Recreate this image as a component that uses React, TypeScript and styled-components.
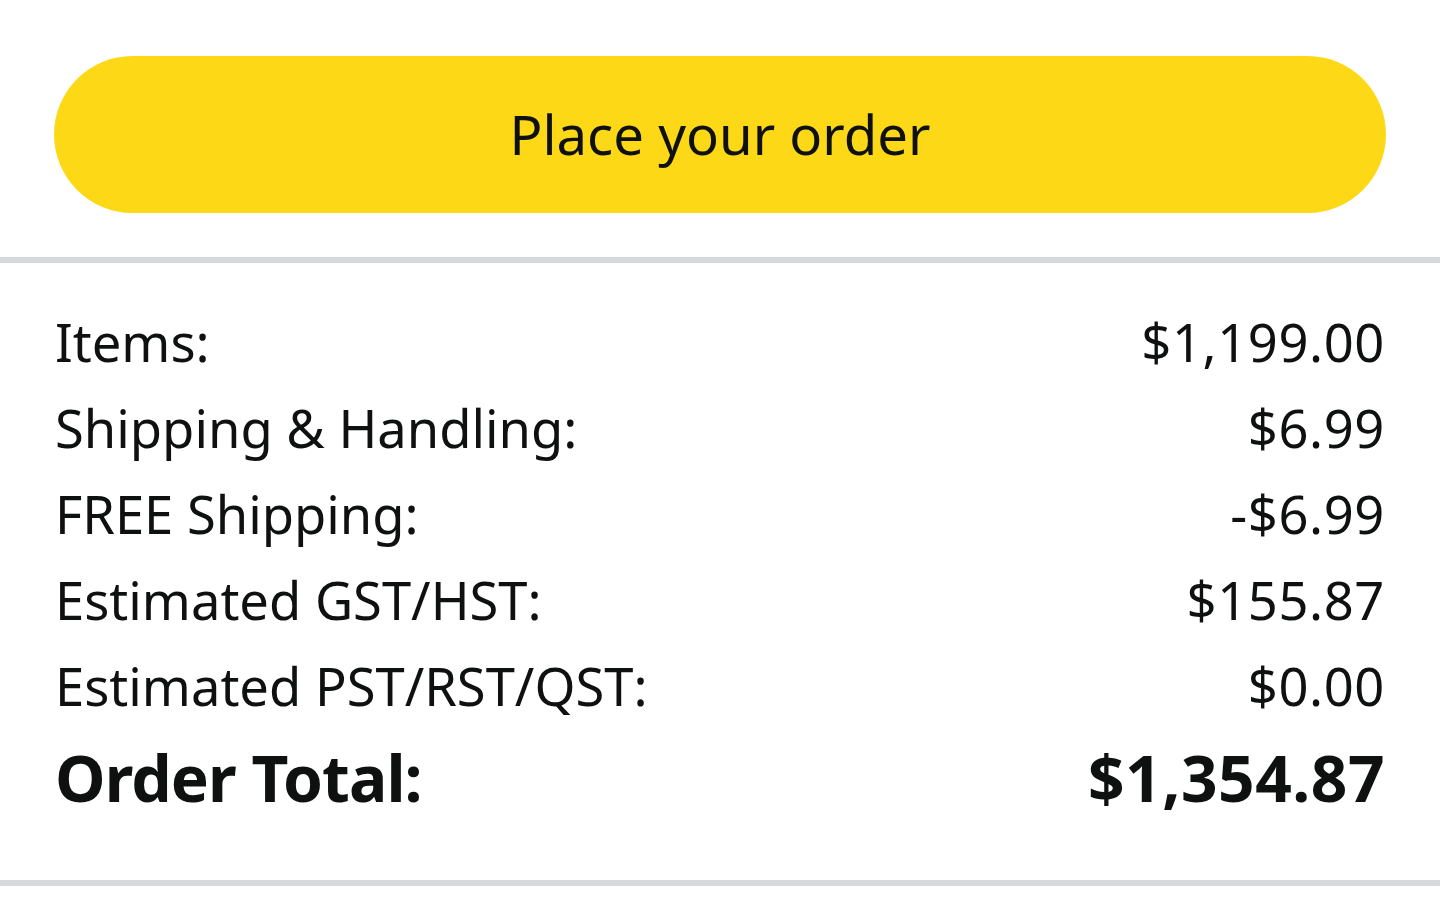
import React from "react";
import styled, { createGlobalStyle } from "styled-components";

const GlobalStyle = createGlobalStyle`
  html, body {
    margin: 0;
    padding: 0;
    background: #ffffff;
  }
  body {
    font-family: "Noto Sans", "DejaVu Sans", sans-serif;
    color: #0f1111;
  }
`;

const Page = styled.div`
  width: 1440px;
  background: #ffffff;
`;

const ButtonArea = styled.div`
  padding: 56px 54px 44px 54px;
`;

const PlaceOrderButton = styled.button`
  display: flex;
  align-items: center;
  justify-content: center;
  width: 100%;
  height: 157px;
  border: none;
  border-radius: 79px;
  background: #fcd816;
  color: #0f1111;
  font-family: "Noto Sans", "DejaVu Sans", sans-serif;
  font-size: 54.5px;
  font-weight: 400;
  letter-spacing: 0;
  padding: 0 0 2px 0;
  cursor: pointer;
`;

const Divider = styled.div`
  height: 6px;
  background: #d5d9d9;
`;

const Summary = styled.div`
  padding: 36px 55px 54px 55px;
  display: flex;
  flex-direction: column;
`;

const Row = styled.div<{ $total?: boolean }>`
  display: flex;
  justify-content: space-between;
  align-items: baseline;
  font-size: ${(p) => (p.$total ? "64px" : "52.5px")};
  font-weight: ${(p) => (p.$total ? 700 : 400)};
  line-height: ${(p) => (p.$total ? "97px" : "86px")};
  color: #0f1111;
`;

const Label = styled.span<{ $total?: boolean }>`
  letter-spacing: ${(p) => (p.$total ? "-0.9px" : "0")};
`;

const Value = styled.span<{ $total?: boolean }>`
  letter-spacing: ${(p) => (p.$total ? "0.5px" : "0.6px")};
`;

const rows: { label: string; value: string }[] = [
  { label: "Items:", value: "$1,199.00" },
  { label: "Shipping & Handling:", value: "$6.99" },
  { label: "FREE Shipping:", value: "-$6.99" },
  { label: "Estimated GST/HST:", value: "$155.87" },
  { label: "Estimated PST/RST/QST:", value: "$0.00" },
];

export default function App() {
  return (
    <Page>
      <GlobalStyle />
      <ButtonArea>
        <PlaceOrderButton>Place your order</PlaceOrderButton>
      </ButtonArea>
      <Divider />
      <Summary>
        {rows.map((r) => (
          <Row key={r.label}>
            <Label>{r.label}</Label>
            <Value>{r.value}</Value>
          </Row>
        ))}
        <Row $total>
          <Label $total>Order Total:</Label>
          <Value $total>$1,354.87</Value>
        </Row>
      </Summary>
      <Divider />
    </Page>
  );
}
